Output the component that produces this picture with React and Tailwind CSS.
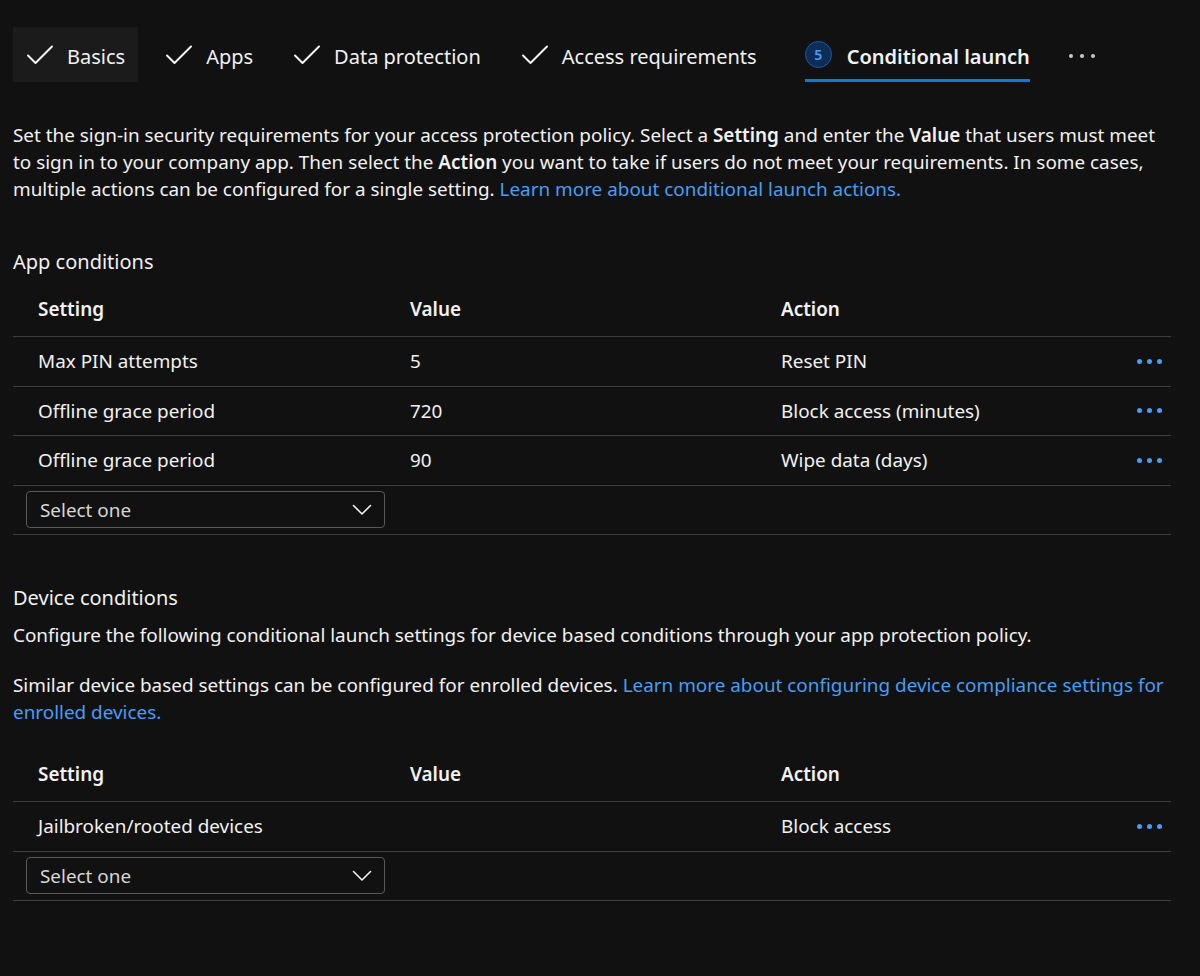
import React from 'react';

const FONT = { fontFamily: '"Segoe UI", "Noto Sans", "Open Sans", sans-serif' };

const TABS = [
  { label: 'Basics', done: true, hover: true },
  { label: 'Apps', done: true },
  { label: 'Data protection', done: true },
  { label: 'Access requirements', done: true },
  { label: 'Conditional launch', step: 5, current: true },
];

const APP_ROWS = [
  { setting: 'Max PIN attempts', value: '5', action: 'Reset PIN' },
  { setting: 'Offline grace period', value: '720', action: 'Block access (minutes)' },
  { setting: 'Offline grace period', value: '90', action: 'Wipe data (days)' },
];

const DEVICE_ROWS = [
  { setting: 'Jailbroken/rooted devices', value: '', action: 'Block access' },
];

function Check() {
  return (
    <svg width="28" height="22" viewBox="0 0 28 22" fill="none" className="shrink-0">
      <path d="M2 11.5 L9.5 19 L26 2.5" stroke="#f2f2f2" strokeWidth="2" strokeLinecap="round" strokeLinejoin="round" />
    </svg>
  );
}

function Chevron() {
  return (
    <svg width="20" height="12" viewBox="0 0 20 12" fill="none">
      <path d="M1.5 1.5 L10 10 L18.5 1.5" stroke="#f2f2f2" strokeWidth="1.6" strokeLinecap="round" strokeLinejoin="round" />
    </svg>
  );
}

function Dots() {
  return (
    <span className="flex items-center gap-[5px]">
      <span className="w-[5px] h-[5px] rounded-full bg-[#479ef5]" />
      <span className="w-[5px] h-[5px] rounded-full bg-[#479ef5]" />
      <span className="w-[5px] h-[5px] rounded-full bg-[#479ef5]" />
    </span>
  );
}

function Tabs() {
  return (
    <div className="flex items-stretch h-[55px]">
      {TABS.map((t) =>
        t.current ? (
          <div key={t.label} className="relative flex items-center gap-[15px] ml-[21px] text-[20px] font-semibold text-[#f2f2f2]">
            <span className="w-[27px] h-[27px] rounded-full bg-[#0c2d57] border border-[#1a5ba3] text-[#4aa0f0] text-[14px] font-semibold flex items-center justify-center">
              {t.step}
            </span>
            <span className="leading-none pt-[4px]">{t.label}</span>
            <span className="absolute left-0 right-0 bottom-0 h-[3px] bg-[#0f7ad6]" />
          </div>
        ) : (
          <div
            key={t.label}
            className={`flex items-center gap-[13px] px-[13px] mr-[14px] text-[20px] text-[#f2f2f2] ${t.hover ? 'bg-[#1b1b1b]' : ''}`}
          >
            <Check />
            <span className="leading-none pt-[4px]">{t.label}</span>
          </div>
        )
      )}
      <div className="flex items-center ml-[39px] pt-[2px] gap-[7px]">
        <span className="w-[4px] h-[4px] rounded-full bg-[#c8c8c8]" />
        <span className="w-[4px] h-[4px] rounded-full bg-[#c8c8c8]" />
        <span className="w-[4px] h-[4px] rounded-full bg-[#c8c8c8]" />
      </div>
    </div>
  );
}

function Table({ rows }) {
  const cell = 'pl-[25px] flex items-center';
  return (
    <div className="w-[1158px] text-[18.9px] text-[#f2f2f2]">
      <div className="grid grid-cols-[372px_371px_1fr_60px] h-[51px] pb-[4px] border-b border-[#3d3d3d] font-semibold">
        <div className={cell}>Setting</div>
        <div className={cell}>Value</div>
        <div className={cell}>Action</div>
        <div />
      </div>
      {rows.map((r, i) => (
        <div key={i} className="grid grid-cols-[372px_371px_1fr_60px] h-[49.5px] border-b border-[#3d3d3d]">
          <div className={cell}>{r.setting}</div>
          <div className={cell}>{r.value}</div>
          <div className={cell}>{r.action}</div>
          <div className="flex items-center justify-end pr-[9px]">
            <Dots />
          </div>
        </div>
      ))}
      <div className="h-[49.5px] flex items-center pl-[13px] border-b border-[#3d3d3d]">
        <div className="w-[359px] h-[37px] border border-[#5a5a5a] rounded-[4px] flex items-center justify-between pl-[13px] pr-[12px] text-[#d6d6d6]">
          <span>Select one</span>
          <Chevron />
        </div>
      </div>
    </div>
  );
}

export default function App() {
  return (
    <div className="min-h-[976px] bg-[#111111] px-[13px] pt-[27px]" style={FONT}>
      <Tabs />

      <p className="mt-[40px] text-[18.9px] leading-[27px] text-[#f2f2f2]">
        Set the sign-in security requirements for your access protection policy. Select a <b className="font-semibold">Setting</b> and enter the <b className="font-semibold">Value</b> that users must meet
        <br />
        to sign in to your company app. Then select the <b className="font-semibold">Action</b> you want to take if users do not meet your requirements. In some cases,
        <br />
        multiple actions can be configured for a single setting. <span className="text-[#479ef5]">Learn more about conditional launch actions.</span>
      </p>

      <h2 className="mt-[45px] text-[20px] leading-[27px] text-[#f2f2f2]">App conditions</h2>
      <div className="mt-[11px]">
        <Table rows={APP_ROWS} />
      </div>

      <h2 className="mt-[49px] text-[20px] leading-[27px] text-[#f2f2f2]">Device conditions</h2>
      <p className="mt-[11px] text-[18.9px] leading-[27px] text-[#f2f2f2]">
        Configure the following conditional launch settings for device based conditions through your app protection policy.
      </p>
      <p className="mt-[23px] text-[18.9px] leading-[27px] text-[#f2f2f2]">
        Similar device based settings can be configured for enrolled devices. <span className="text-[#479ef5]">Learn more about configuring device compliance settings for</span>
        <br />
        <span className="text-[#479ef5]">enrolled devices.</span>
      </p>
      <div className="mt-[25px]">
        <Table rows={DEVICE_ROWS} />
      </div>
    </div>
  );
}
